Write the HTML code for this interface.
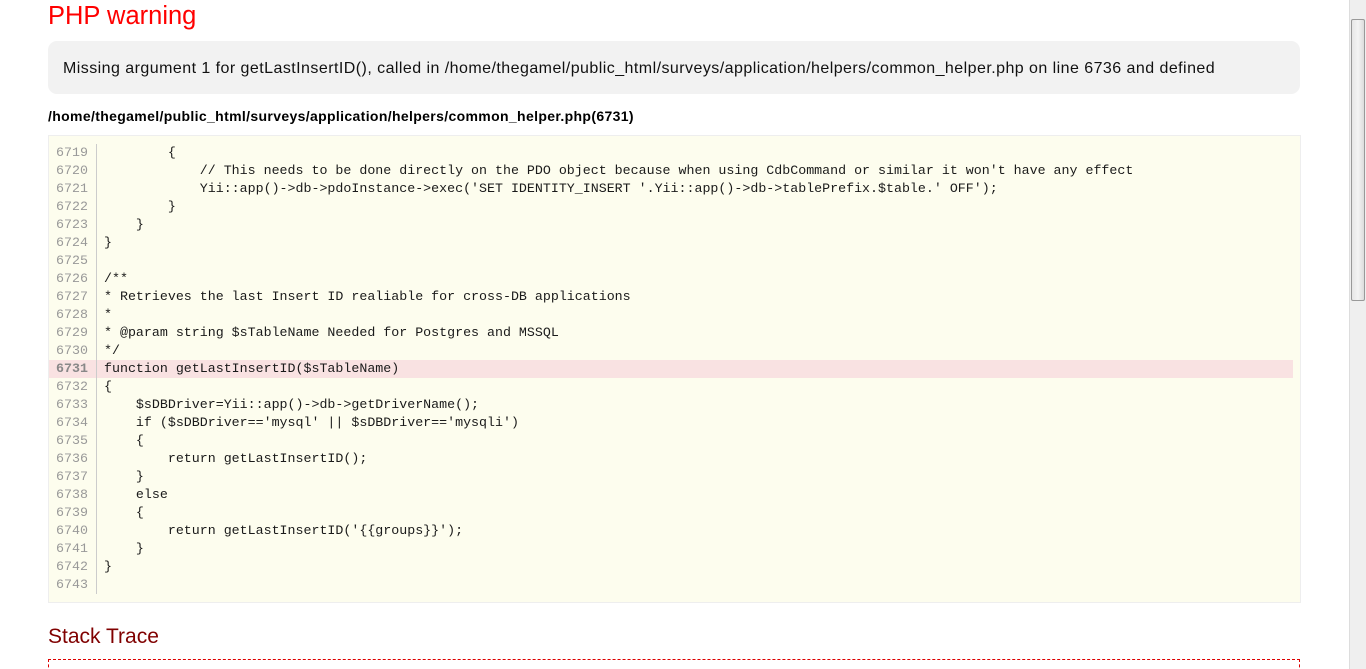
<!DOCTYPE html>
<html><head><meta charset="utf-8"><style>
html,body{margin:0;padding:0;background:#fff;overflow:hidden;width:1366px;height:669px}
body{font-family:"DejaVu Sans","Liberation Sans",sans-serif;position:relative}
h1{position:absolute;left:48px;top:0;margin:0;font-weight:normal;color:#f00;font-size:25.5px;line-height:32px;font-family:"Liberation Sans",sans-serif}
.msg{position:absolute;left:48px;top:41px;width:1252px;height:53px;background:#f2f2f2;border-radius:9px;font-size:16px;letter-spacing:0.45px;line-height:56px;color:#111;box-sizing:border-box;padding-left:15px;font-family:"Liberation Sans",sans-serif}
.file{position:absolute;left:48px;top:107px;font-size:14px;letter-spacing:0.35px;font-weight:bold;line-height:18px;color:#000;font-family:"Liberation Sans",sans-serif}
.code{position:absolute;left:48px;top:135px;width:1253px;height:468px;background:#fdfdee;border:1px solid #eee;box-sizing:border-box}
.gut{position:absolute;left:0;top:8px;width:47px;height:450px;border-right:1px solid #ccc;}
.row{position:absolute;left:0;height:18px;font-family:"Liberation Mono",monospace;font-size:13.3px;line-height:18px;white-space:pre;color:#1a1a1a}
.n{position:absolute;left:7px;width:34px;color:#999;text-align:left}
.t{position:absolute;left:55px}
.hl{position:absolute;left:0;width:1244px;height:18px;background:#f9e2e2}
h2{position:absolute;left:48px;top:624px;margin:0;font-weight:normal;color:#800000;font-size:21px;line-height:26px;font-family:"Liberation Sans",sans-serif}
.st{position:absolute;left:48px;top:659px;width:1252px;height:30px;border:1px dashed #d00;box-sizing:border-box}
.sb{position:absolute;right:0;top:0;width:17px;height:669px;background:#efefef;border-left:1px solid #ddd;box-sizing:border-box}
.th{position:absolute;left:1px;top:19px;width:14px;height:282px;background:linear-gradient(90deg,#e6e6e6,#f4f4f4 50%,#dcdcdc);border:1px solid #999;border-radius:2px;box-sizing:border-box}
</style></head><body>
<h1>PHP warning</h1>
<div class="msg">Missing argument 1 for getLastInsertID(), called in /home/thegamel/public_html/surveys/application/helpers/common_helper.php on line 6736 and defined</div>
<div class="file">/home/thegamel/public_html/surveys/application/helpers/common_helper.php(6731)</div>
<div class="code">
<div class="hl" style="top:224px"></div>
<div class="gut"></div>
<div class="row" style="top:8px"><span class="n">6719</span><span class="t">        {</span></div>
<div class="row" style="top:26px"><span class="n">6720</span><span class="t">            // This needs to be done directly on the PDO object because when using CdbCommand or similar it won't have any effect</span></div>
<div class="row" style="top:44px"><span class="n">6721</span><span class="t">            Yii::app()->db->pdoInstance->exec('SET IDENTITY_INSERT '.Yii::app()->db->tablePrefix.$table.' OFF');</span></div>
<div class="row" style="top:62px"><span class="n">6722</span><span class="t">        }</span></div>
<div class="row" style="top:80px"><span class="n">6723</span><span class="t">    }</span></div>
<div class="row" style="top:98px"><span class="n">6724</span><span class="t">}</span></div>
<div class="row" style="top:116px"><span class="n">6725</span><span class="t"></span></div>
<div class="row" style="top:134px"><span class="n">6726</span><span class="t">/**</span></div>
<div class="row" style="top:152px"><span class="n">6727</span><span class="t">* Retrieves the last Insert ID realiable for cross-DB applications</span></div>
<div class="row" style="top:170px"><span class="n">6728</span><span class="t">*</span></div>
<div class="row" style="top:188px"><span class="n">6729</span><span class="t">* @param string $sTableName Needed for Postgres and MSSQL</span></div>
<div class="row" style="top:206px"><span class="n">6730</span><span class="t">*/</span></div>
<div class="row" style="top:224px"><span class="n" style="font-weight:bold;color:#888">6731</span><span class="t">function getLastInsertID($sTableName)</span></div>
<div class="row" style="top:242px"><span class="n">6732</span><span class="t">{</span></div>
<div class="row" style="top:260px"><span class="n">6733</span><span class="t">    $sDBDriver=Yii::app()->db->getDriverName();</span></div>
<div class="row" style="top:278px"><span class="n">6734</span><span class="t">    if ($sDBDriver=='mysql' || $sDBDriver=='mysqli')</span></div>
<div class="row" style="top:296px"><span class="n">6735</span><span class="t">    {</span></div>
<div class="row" style="top:314px"><span class="n">6736</span><span class="t">        return getLastInsertID();</span></div>
<div class="row" style="top:332px"><span class="n">6737</span><span class="t">    }</span></div>
<div class="row" style="top:350px"><span class="n">6738</span><span class="t">    else</span></div>
<div class="row" style="top:368px"><span class="n">6739</span><span class="t">    {</span></div>
<div class="row" style="top:386px"><span class="n">6740</span><span class="t">        return getLastInsertID('{{groups}}');</span></div>
<div class="row" style="top:404px"><span class="n">6741</span><span class="t">    }</span></div>
<div class="row" style="top:422px"><span class="n">6742</span><span class="t">}</span></div>
<div class="row" style="top:440px"><span class="n">6743</span><span class="t"></span></div>
</div>
<h2>Stack Trace</h2>
<div class="st"></div>
<div class="sb"><div class="th"></div></div>
</body></html>
